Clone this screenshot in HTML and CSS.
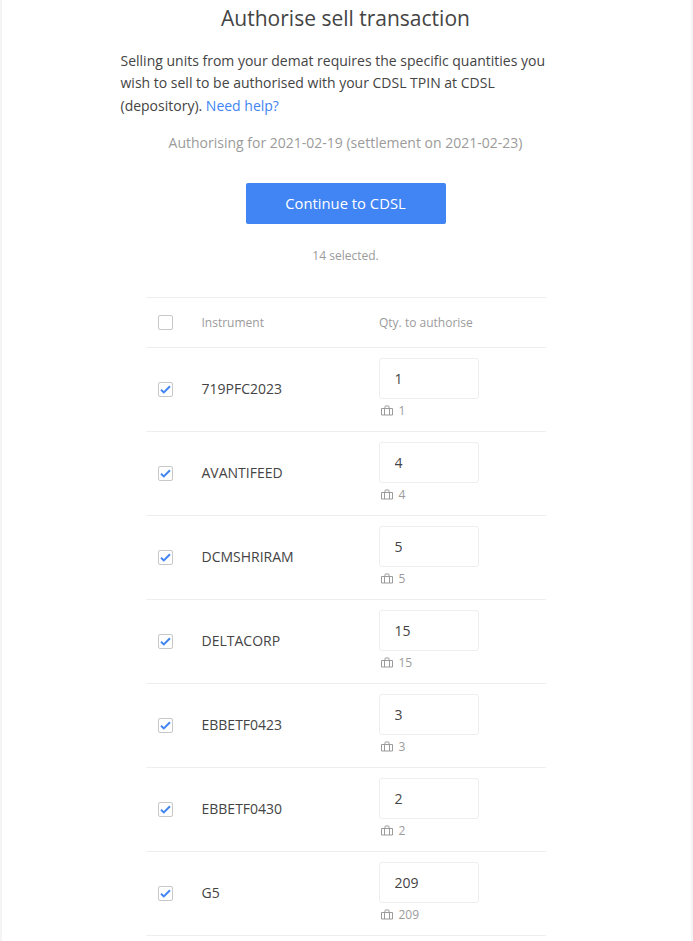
FILE: index.html
```html
<!DOCTYPE html>
<html lang="en">
<head>
<meta charset="utf-8">
<title>Authorise sell transaction</title>
<link rel="stylesheet" href="styles.css">
</head>
<body>
<svg class="defs" width="0" height="0" aria-hidden="true">
  <symbol id="case" viewBox="0 0 12 11"><path d="M.5 3.5h11v6.5H.5zM3.5 10V3.5M8.5 10V3.5M4 3.5V1.5a.5.5 0 0 1 .5-.5h3a.5.5 0 0 1 .5.5v2" fill="none" stroke="currentColor" stroke-width="1"/></symbol>
  <symbol id="tick" viewBox="0 0 11 9"><path d="M1 4.8l2.8 2.6L10 1.3" fill="none" stroke="currentColor" stroke-width="2"/></symbol>
</svg>
<main class="page">
  <h1 class="title">Authorise sell transaction</h1>
  <p class="intro">Selling units from your demat requires the specific quantities you wish to sell to be authorised with your CDSL TPIN at CDSL (depository). <a class="link" href="#">Need help?</a></p>
  <p class="for">Authorising for 2021-02-19 (settlement on 2021-02-23)</p>
  <div class="action"><button class="primary" type="button">Continue to CDSL</button></div>
  <p class="count">14 selected.</p>
  <div class="table">
    <div class="row head">
      <span class="box"></span>
      <span class="name">Instrument</span>
      <span class="qty-h">Qty. to authorise</span>
    </div>
    <div class="row">
      <span class="box"><svg class="tick"><use href="#tick"/></svg></span>
      <span class="name">719PFC2023</span>
      <div class="qty"><input class="input" value="1"><div class="hold"><svg class="case"><use href="#case"/></svg>1</div></div>
    </div>
    <div class="row">
      <span class="box"><svg class="tick"><use href="#tick"/></svg></span>
      <span class="name">AVANTIFEED</span>
      <div class="qty"><input class="input" value="4"><div class="hold"><svg class="case"><use href="#case"/></svg>4</div></div>
    </div>
    <div class="row">
      <span class="box"><svg class="tick"><use href="#tick"/></svg></span>
      <span class="name">DCMSHRIRAM</span>
      <div class="qty"><input class="input" value="5"><div class="hold"><svg class="case"><use href="#case"/></svg>5</div></div>
    </div>
    <div class="row">
      <span class="box"><svg class="tick"><use href="#tick"/></svg></span>
      <span class="name">DELTACORP</span>
      <div class="qty"><input class="input" value="15"><div class="hold"><svg class="case"><use href="#case"/></svg>15</div></div>
    </div>
    <div class="row">
      <span class="box"><svg class="tick"><use href="#tick"/></svg></span>
      <span class="name">EBBETF0423</span>
      <div class="qty"><input class="input" value="3"><div class="hold"><svg class="case"><use href="#case"/></svg>3</div></div>
    </div>
    <div class="row">
      <span class="box"><svg class="tick"><use href="#tick"/></svg></span>
      <span class="name">EBBETF0430</span>
      <div class="qty"><input class="input" value="2"><div class="hold"><svg class="case"><use href="#case"/></svg>2</div></div>
    </div>
    <div class="row">
      <span class="box"><svg class="tick"><use href="#tick"/></svg></span>
      <span class="name">G5</span>
      <div class="qty"><input class="input" value="209"><div class="hold"><svg class="case"><use href="#case"/></svg>209</div></div>
    </div>
  </div>
</main>
</body>
</html>
```
FILE: styles.css
```css
html, body { margin: 0; padding: 0; height: 941px; overflow: hidden; background: #fff; }
body { font-family: "Open Sans", sans-serif; color: #444; }
.defs { display: block; height: 0; }
.page {
  width: 693px;
  height: 941px;
  box-sizing: border-box;
  border-left: 2px solid #f4f4f4;
  border-right: 2px solid #f4f4f4;
  padding-right: 2px;
  overflow: hidden;
}
.title { margin: 0; padding-top: 3px; font-size: 21px; line-height: 30px; font-weight: 400; text-align: center; color: #444; }
.intro { width: 450px; margin: 17px auto 0; font-size: 14px; line-height: 22.4px; color: #444; }
.link { text-decoration: none; color: #4184f3; }
.for { margin: 15px 0 0; text-align: center; font-size: 14px; line-height: 22px; color: #9b9b9b; }
.action { margin-top: 29px; display: flex; justify-content: center; }
.primary {
  width: 200px; height: 41px; border: 0; border-radius: 2px; padding: 0 0 2px;
  background: #4184f3; color: #fff;
  font-family: inherit; font-size: 14.8px;
}
.count { margin: 23px 0 0; text-align: center; font-size: 12px; line-height: 18px; color: #9b9b9b; }
.table { width: 400px; margin: 32px auto 0; border-top: 1px solid #eee; }
.row { display: flex; align-items: center; height: 83px; border-bottom: 1px solid #eee; font-size: 14px; }
.row.head { height: 49px; font-size: 12px; color: #9b9b9b; }
.box {
  width: 13px; height: 13px; margin-left: 12px; flex: none;
  border: 1px solid #c8c8c8; border-radius: 2px; background: #fff;
  display: flex; align-items: center; justify-content: center;
}
.tick { width: 11px; height: 9px; color: #4184f3; }
.name { width: 177px; margin: -2px 0 0 29px; flex: none; }
.row.head .name { margin-top: 0; }
.qty-h { flex: none; margin-left: 0.5px; }
.qty { flex: none; width: 100px; }
.input {
  display: block; width: 100px; height: 41px; box-sizing: border-box;
  padding: 0 15px; margin-top: -3px;
  border: 1px solid #eee; border-radius: 3px; outline: none;
  font-family: inherit; font-size: 14px; color: #444; background: #fff;
}
.hold { display: flex; align-items: center; margin-top: 3px; height: 17px; font-size: 12px; color: #9b9b9b; }
.case { width: 12px; height: 11px; margin: 0 6px 0 2px; color: #9b9b9b; }
```
